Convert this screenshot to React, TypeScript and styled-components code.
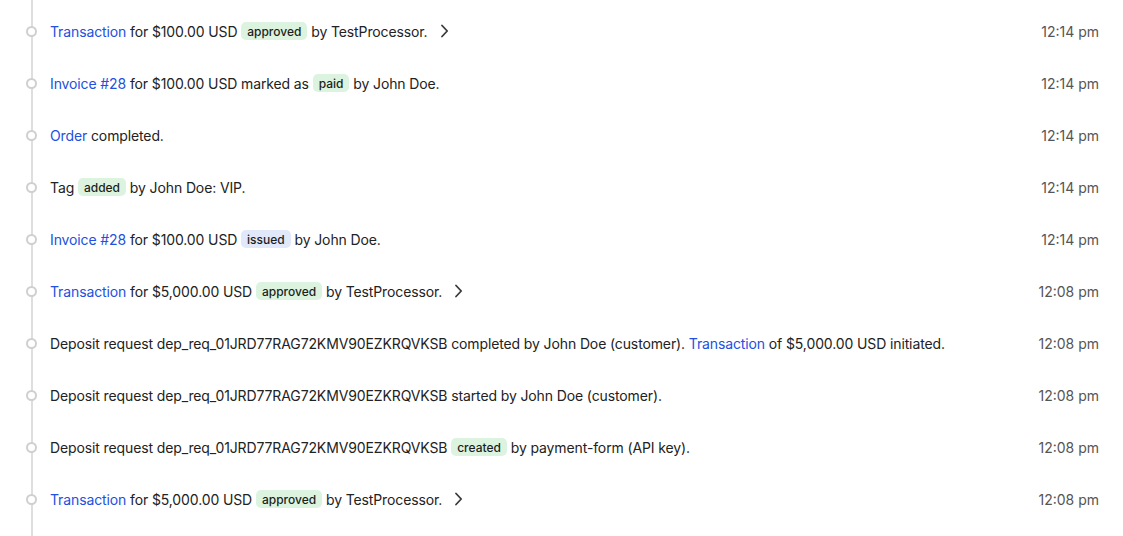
import React from "react";
import styled, { createGlobalStyle } from "styled-components";

const Global = createGlobalStyle`
  html, body { margin: 0; padding: 0; background: #fff; }
  body { font-family: Inter, "Noto Sans", sans-serif; -webkit-font-smoothing: antialiased; }
`;

const Timeline = styled.div`
  min-height: 100vh;
  box-sizing: border-box;
  padding-top: 5px;
  background: linear-gradient(#dedede, #dedede) no-repeat 31px 0 / 2px 100%;
`;

const Row = styled.div`
  display: flex;
  align-items: center;
  height: 52px;
  padding-right: 24px;
  font-size: 14px;
  letter-spacing: -0.12px;
  color: #222;
`;

const Dot = styled.span`
  flex: none;
  box-sizing: border-box;
  width: 11px;
  height: 11px;
  margin-left: 26px;
  margin-right: 13px;
  border-radius: 50%;
  border: 2px solid #cfcfcf;
  background: #fff;
`;

const Message = styled.div`
  flex: 1;
  display: flex;
  align-items: center;
  white-space: pre;
`;

const Link = styled.a`
  color: #2250e0;
  text-decoration: none;
  cursor: pointer;
`;

const Badge = styled.span<{ $tone: "green" | "blue" }>`
  display: inline-flex;
  align-items: center;
  height: 18px;
  padding: 0 6px;
  border-radius: 5px;
  font-size: 12px;
  font-weight: 500;
  letter-spacing: 0;
  color: #1d1d1d;
  background: ${(p) => (p.$tone === "green" ? "#dcf4df" : "#e1e8f9")};
`;

const Chevron = styled.svg`
  margin-left: 12px;
  flex: none;
`;

const Time = styled.span`
  flex: none;
  color: #555;
  font-size: 14px;
  letter-spacing: 0;
`;

const Arrow = () => (
  <Chevron width="9" height="14" viewBox="0 0 9 14">
    <path d="M2 1.5 L7.2 7 L2 12.5" fill="none" stroke="#3a3a3a" strokeWidth="1.8" strokeLinecap="round" strokeLinejoin="round" />
  </Chevron>
);

type Item = { content: React.ReactNode; time: string; arrow?: boolean };

const items: Item[] = [
  {
    content: (<><Link>Transaction</Link>{" for $100.00 USD "}<Badge $tone="green">approved</Badge>{" by TestProcessor."}</>),
    time: "12:14 pm",
    arrow: true,
  },
  {
    content: (<><Link>Invoice #28</Link>{" for $100.00 USD marked as "}<Badge $tone="green">paid</Badge>{" by John Doe."}</>),
    time: "12:14 pm",
  },
  { content: (<><Link>Order</Link>{" completed."}</>), time: "12:14 pm" },
  {
    content: (<>{"Tag "}<Badge $tone="green">added</Badge>{" by John Doe: VIP."}</>),
    time: "12:14 pm",
  },
  {
    content: (<><Link>Invoice #28</Link>{" for $100.00 USD "}<Badge $tone="blue">issued</Badge>{" by John Doe."}</>),
    time: "12:14 pm",
  },
  {
    content: (<><Link>Transaction</Link>{" for $5,000.00 USD "}<Badge $tone="green">approved</Badge>{" by TestProcessor."}</>),
    time: "12:08 pm",
    arrow: true,
  },
  {
    content: (<>{"Deposit request dep_req_01JRD77RAG72KMV90EZKRQVKSB completed by John Doe (customer). "}<Link>Transaction</Link>{" of $5,000.00 USD initiated."}</>),
    time: "12:08 pm",
  },
  {
    content: (<>{"Deposit request dep_req_01JRD77RAG72KMV90EZKRQVKSB started by John Doe (customer)."}</>),
    time: "12:08 pm",
  },
  {
    content: (<>{"Deposit request dep_req_01JRD77RAG72KMV90EZKRQVKSB "}<Badge $tone="green">created</Badge>{" by payment-form (API key)."}</>),
    time: "12:08 pm",
  },
  {
    content: (<><Link>Transaction</Link>{" for $5,000.00 USD "}<Badge $tone="green">approved</Badge>{" by TestProcessor."}</>),
    time: "12:08 pm",
    arrow: true,
  },
];

export default function App() {
  return (
    <>
      <Global />
      <Timeline>
        {items.map((it, i) => (
          <Row key={i}>
            <Dot />
            <Message>
              {it.content}
              {it.arrow && <Arrow />}
            </Message>
            <Time>{it.time}</Time>
          </Row>
        ))}
      </Timeline>
    </>
  );
}
